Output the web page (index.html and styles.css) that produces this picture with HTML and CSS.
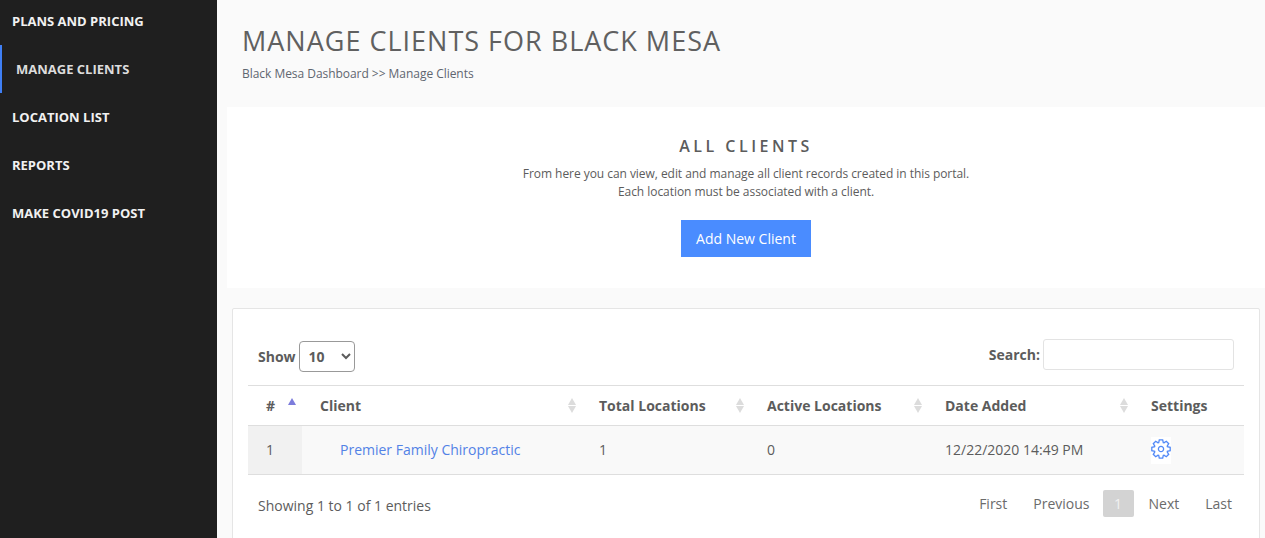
FILE: index.html
```html
<!doctype html>
<html lang="en">
  <head>
    <meta charset="UTF-8" />
    <title>Manage Clients</title>
    <link rel="stylesheet" href="styles.css">
  </head>
  <body>
    <nav class="sidebar">
      <a href="#" class="nav-link">Plans and Pricing</a>
      <a href="#" class="nav-link active">Manage Clients</a>
      <a href="#" class="nav-link">Location List</a>
      <a href="#" class="nav-link">Reports</a>
      <a href="#" class="nav-link">Make COVID19 Post</a>
    </nav>

    <main class="content">
      <header class="page-head">
        <h1>Manage Clients for Black Mesa</h1>
        <p>Black Mesa Dashboard &gt;&gt; Manage Clients</p>
      </header>

      <section class="intro">
        <h2>All Clients</h2>
        <p>From here you can view, edit and manage all client records created in this portal.<br />Each location must be associated with a client.</p>
        <a href="#" class="add-btn">Add New Client</a>
      </section>

      <section class="card">
        <div class="table-tools">
          <label class="show-label">Show
            <select>
              <option>10</option>
              <option>25</option>
              <option>50</option>
            </select>
          </label>
          <label class="search-label">Search:
            <input type="search" />
          </label>
        </div>

        <table class="clients">
          <thead>
            <tr>
              <th class="col-num">#<span class="sort-up"></span></th>
              <th class="col-client">Client<span class="sort"></span></th>
              <th class="col-total">Total Locations<span class="sort"></span></th>
              <th class="col-active">Active Locations<span class="sort"></span></th>
              <th class="col-date">Date Added<span class="sort"></span></th>
              <th class="col-settings">Settings</th>
            </tr>
          </thead>
          <tbody>
            <tr>
              <td class="cell-num">1</td>
              <td class="cell-client"><a href="#">Premier Family Chiropractic</a></td>
              <td>1</td>
              <td>0</td>
              <td>12/22/2020 14:49 PM</td>
              <td>
                <a href="#" class="gear">
                  <svg width="20" height="20" viewBox="-10 -10 20 20" fill="none" stroke="#5189f7" stroke-width="1.3" stroke-linejoin="miter">
                    <defs>
                      <path id="tooth" d="M-2.4 -5.9L-1.7 -9.2L1.7 -9.2L2.4 -5.9" />
                    </defs>
                    <use href="#tooth" />
                    <use href="#tooth" transform="rotate(45)" />
                    <use href="#tooth" transform="rotate(90)" />
                    <use href="#tooth" transform="rotate(135)" />
                    <use href="#tooth" transform="rotate(180)" />
                    <use href="#tooth" transform="rotate(225)" />
                    <use href="#tooth" transform="rotate(270)" />
                    <use href="#tooth" transform="rotate(315)" />
                    <circle r="2.6" />
                  </svg>
                </a>
              </td>
            </tr>
          </tbody>
        </table>

        <div class="table-foot">
          <div class="entries">Showing 1 to 1 of 1 entries</div>
          <div class="pager">
            <a href="#">First</a>
            <a href="#">Previous</a>
            <a href="#" class="current">1</a>
            <a href="#">Next</a>
            <a href="#">Last</a>
          </div>
        </div>
      </section>
    </main>
  </body>
</html>
```

FILE: styles.css
```css
* {
  box-sizing: border-box;
}
html,
body {
  height: 100%;
}
body {
  margin: 0;
  display: flex;
  overflow: hidden;
  background: #fafafa;
  color: #5c5c5c;
  font-family: "Open Sans", sans-serif;
  font-size: 14px;
}
a {
  text-decoration: none;
}

.sidebar {
  flex: 0 0 217px;
  background: #1f1f1f;
  margin-top: -3px;
}
.nav-link {
  display: block;
  height: 48px;
  line-height: 48px;
  padding-left: 12px;
  color: #f1f1f1;
  font-size: 13px;
  font-weight: 700;
  text-transform: uppercase;
}
.nav-link.active {
  padding-left: 14px;
  border-left: 2px solid #3f7ff5;
  color: #dcdcdc;
}

.content {
  flex: 1;
  min-width: 0;
  padding-left: 10px;
}
.page-head {
  height: 107px;
  padding: 22px 0 0 15px;
}
.page-head h1 {
  margin: 0;
  font-size: 27px;
  line-height: 38px;
  font-weight: 400;
  letter-spacing: 1px;
  text-transform: uppercase;
  color: #606060;
}
.page-head p {
  margin: 5px 0 0;
  font-size: 12px;
  line-height: 18px;
  letter-spacing: -0.04px;
  color: #5f6670;
}

.intro {
  height: 181px;
  padding-top: 28px;
  background: #fff;
  text-align: center;
}
.intro h2 {
  margin: 0;
  font-size: 16px;
  line-height: 22px;
  font-weight: 600;
  letter-spacing: 3.5px;
  text-transform: uppercase;
}
.intro p {
  margin: 8px 0 19px;
  font-size: 12px;
  line-height: 18px;
  letter-spacing: -0.05px;
}
.add-btn {
  display: inline-block;
  width: 130px;
  height: 37px;
  line-height: 37px;
  background: #4a8cff;
  color: #fff;
  font-size: 14px;
}

.card {
  margin: 20px 5px 0;
  padding: 30px 15px 40px;
  background: #fff;
  border: 1px solid #e5e5e5;
  border-radius: 2px;
}
.table-tools {
  display: flex;
  justify-content: space-between;
  align-items: flex-start;
  height: 46px;
  padding: 0 10px;
}
.show-label,
.search-label {
  display: flex;
  align-items: center;
  gap: 3px;
  font-weight: 700;
}
.show-label {
  margin-top: 2px;
}
.show-label select {
  width: 56px;
  height: 31px;
  padding-left: 5px;
  border: 1px solid #999;
  border-radius: 4px;
  background: #fff;
  color: #5c5c5c;
  font-family: inherit;
  font-size: 14px;
  font-weight: 700;
}
.search-label input {
  width: 191px;
  height: 31px;
  border: 1px solid #e3e3e3;
  border-radius: 3px;
  background: #fff;
}

.clients {
  width: 996px;
  table-layout: fixed;
  border-collapse: collapse;
  border-top: 1px solid #dedede;
}
.clients th {
  position: relative;
  height: 40px;
  padding: 0 18px;
  text-align: left;
  font-weight: 700;
  border-bottom: 1px solid #dedede;
}
.clients td {
  height: 49px;
  padding: 0 18px 2px;
  background: #f9f9f9;
  border-bottom: 1px solid #dedede;
}
.col-num { width: 54px; }
.col-client { width: 279px; }
.col-total { width: 168px; }
.col-active { width: 178px; }
.col-date { width: 206px; }
.col-settings { width: 111px; }
.clients .cell-num {
  background: #f1f1f1;
}
.clients .cell-client {
  padding-left: 38px;
}
.cell-client a {
  color: #5382e6;
}

/* sort arrows sit over the header cell */
.sort,
.sort-up {
  position: absolute;
  right: 3px;
  top: 12px;
  width: 10px;
  height: 15px;
}
.sort-up {
  right: 4px;
}
.sort::before,
.sort::after,
.sort-up::before {
  content: "";
  position: absolute;
  left: 0;
  border-left: 4.5px solid transparent;
  border-right: 4.5px solid transparent;
}
.sort::before {
  top: 0;
  border-bottom: 7px solid #dcdcdc;
}
.sort::after {
  bottom: 0;
  border-top: 7px solid #dcdcdc;
}
.sort-up::before {
  top: 0;
  border-bottom: 7px solid #7c7cdc;
}

.gear {
  display: block;
  width: 20px;
  height: 27px;
  padding-top: 2px;
  margin-top: 2px;
  background: #fff;
}
.gear svg {
  display: block;
}

.table-foot {
  display: flex;
  justify-content: space-between;
  padding: 15px 0 0 10px;
}
.entries {
  padding-top: 6px;
}
.pager {
  display: flex;
  gap: 2px;
}
.pager a {
  display: block;
  height: 27px;
  line-height: 27px;
  padding: 0 12px;
  color: #6b6b6b;
}
.pager .current {
  width: 31px;
  padding: 0;
  margin: 0 1px 0 -1px;
  text-align: center;
  background: #d3d3d3;
  border-radius: 2px;
  color: #f1f1f1;
}
```
